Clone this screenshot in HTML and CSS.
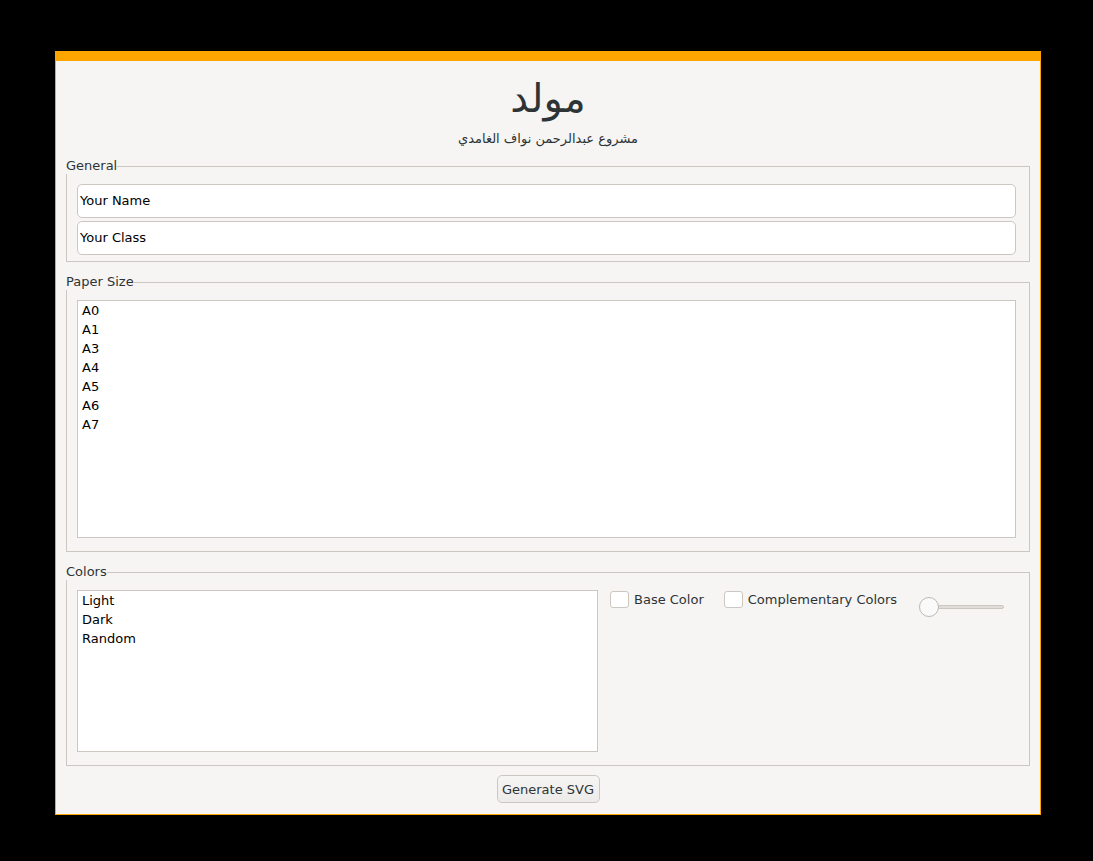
FILE: index.html
```html
<!DOCTYPE html>
<html lang="ar">
<head>
<meta charset="utf-8">
<title>مولد</title>
<link rel="stylesheet" href="styles.css">
</head>
<body>
<div class="window">
  <div class="topbar"></div>
  <div class="content">
    <h1 class="title">مولد</h1>
    <p class="subtitle">مشروع عبدالرحمن نواف الغامدي</p>

    <fieldset class="group group-general">
      <legend>General</legend>
      <div class="entry">Your Name</div>
      <div class="entry">Your Class</div>
    </fieldset>

    <fieldset class="group group-paper">
      <legend>Paper Size</legend>
      <div class="listbox paper-list">
        <div class="item">A0</div>
        <div class="item">A1</div>
        <div class="item">A3</div>
        <div class="item">A4</div>
        <div class="item">A5</div>
        <div class="item">A6</div>
        <div class="item">A7</div>
      </div>
    </fieldset>

    <fieldset class="group group-colors">
      <legend>Colors</legend>
      <div class="colors-row">
        <div class="listbox color-list">
          <div class="item">Light</div>
          <div class="item">Dark</div>
          <div class="item">Random</div>
        </div>
        <div class="options">
          <label class="check"><span class="box"></span>Base Color</label>
          <label class="check"><span class="box"></span>Complementary Colors</label>
          <div class="slider"><span class="knob"></span><span class="track"></span></div>
        </div>
      </div>
    </fieldset>

    <div class="actions">
      <button class="btn">Generate SVG</button>
    </div>
  </div>
</div>
</body>
</html>
```

FILE: styles.css
```css
html, body {
  margin: 0;
  padding: 0;
  background: #000;
}
body {
  width: 1093px;
  height: 861px;
  font-family: "DejaVu Sans", sans-serif;
  font-size: 13px;
  color: #2e3436;
}
.window {
  margin: 51px 0 0 55px;
  width: 984px;
  height: 763px;
  border: 1px solid #ffa500;
  border-top: none;
  background: #f6f5f4;
  display: flex;
  flex-direction: column;
}
.topbar {
  height: 10px;
  background: #ffa500;
  margin: 0 -1px;
}
.content {
  flex: 1;
  display: flex;
  flex-direction: column;
  padding: 0 10px 0 10px;
}
.title {
  margin: 14px 0 0 0;
  text-align: center;
  font-size: 40px;
  font-weight: normal;
  line-height: 46px;
  color: #2e3436;
}
.subtitle {
  margin: 10px 0 0 0;
  text-align: center;
  font-size: 13px;
  line-height: 16px;
  color: #2e3436;
}
.group {
  margin: 0;
  padding: 0 13px 0 10px;
  border: 1px solid #cdc7c2;
  width: 964px;
  box-sizing: border-box;
  min-width: 0;
}
.group legend {
  padding: 0;
  margin-left: -11px;
  font-size: 13px;
  line-height: 16px;
  color: #2e3436;
}
.group-general {
  margin-top: 11px;
  padding-top: 10px;
  padding-bottom: 6px;
  display: flex;
  flex-direction: column;
  gap: 3px;
}
.group-paper {
  margin-top: 12px;
  padding-top: 10px;
  padding-bottom: 13px;
}
.group-colors {
  margin-top: 12px;
  padding-top: 10px;
  padding-bottom: 13px;
}
.entry {
  height: 34px;
  box-sizing: border-box;
  border: 1px solid #cdc7c2;
  border-radius: 5px;
  background: #fff;
  padding: 0 2px 1px;
  display: flex;
  align-items: center;
  color: #000;
}
.listbox {
  background: #fff;
  border: 1px solid #cdc7c2;
  box-sizing: border-box;
  padding: 0 4px;
  color: #000;
}
.paper-list {
  height: 238px;
}
.item {
  line-height: 19px;
  height: 19px;
}
.colors-row {
  display: flex;
  align-items: flex-start;
}
.color-list {
  width: 521px;
  height: 162px;
  flex: none;
}
.options {
  display: flex;
  align-items: flex-start;
  margin-left: 12px;
}
.check {
  display: flex;
  align-items: center;
  height: 19px;
  margin-top: 0;
  margin-right: 20px;
  color: #2e3436;
}
.box {
  width: 19px;
  height: 17px;
  box-sizing: border-box;
  border: 1px solid #cdc7c2;
  border-radius: 3px;
  background: #fff;
  margin-right: 5px;
}
.slider {
  display: flex;
  align-items: center;
  margin-left: 2px;
  margin-top: 7px;
  width: 85px;
}
.knob {
  width: 20px;
  height: 20px;
  box-sizing: border-box;
  border: 1px solid #bfb8b1;
  border-radius: 50%;
  background: #fafafa;
  flex: none;
  position: relative;
  z-index: 1;
}
.track {
  flex: 1;
  height: 4px;
  box-sizing: border-box;
  border: 1px solid #cdc7c2;
  border-radius: 2px;
  background: #e0dcd8;
  margin-left: -2px;
}
.actions {
  display: flex;
  justify-content: center;
  margin-top: 9px;
}
.btn {
  width: 103px;
  height: 28px;
  font-family: "DejaVu Sans", sans-serif;
  font-size: 13px;
  color: #2e3436;
  border: 1px solid #cdc7c2;
  border-radius: 5px;
  background: linear-gradient(#f6f5f4, #edebe9);
  padding: 0;
}
```
